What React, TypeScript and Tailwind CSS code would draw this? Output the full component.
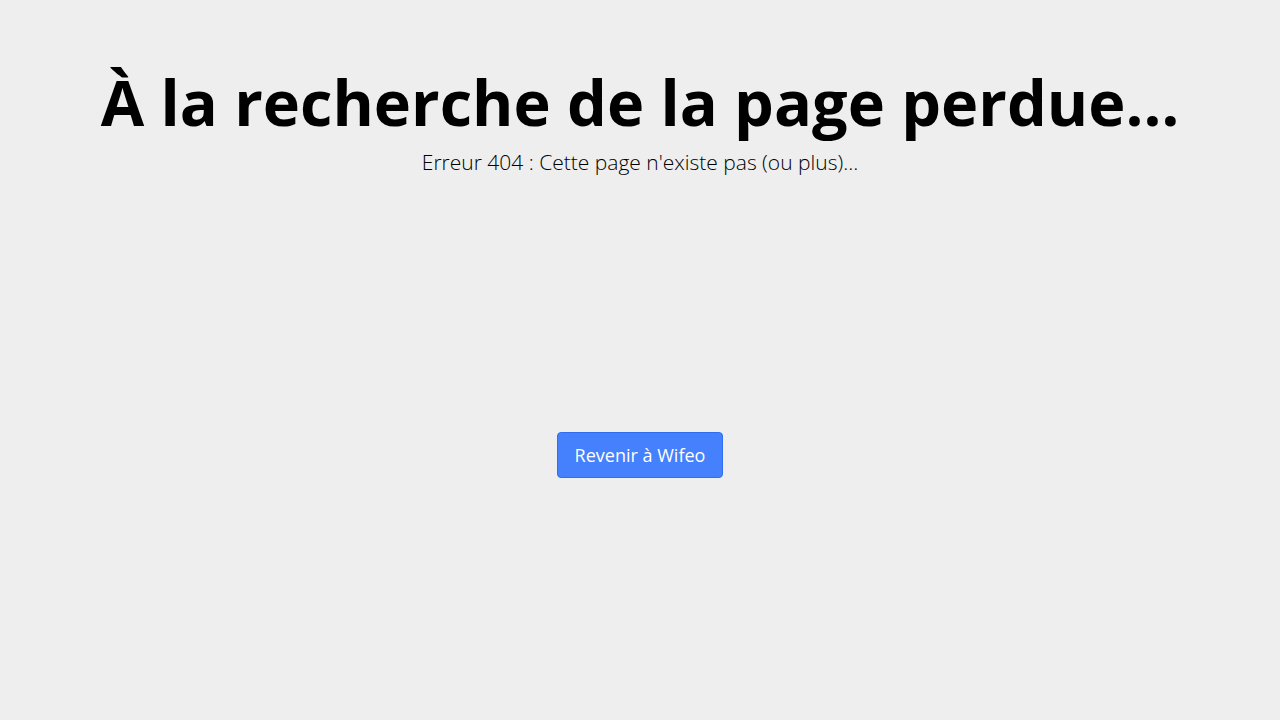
export default function App() {
  return (
    <div className="min-h-screen bg-[#eeeeee] text-black font-['Open_Sans',sans-serif] text-center">
      <div className="pt-[60px]">
        <h1 className="text-[63px] font-bold leading-[84px]">À la recherche de la page perdue…</h1>
        <p className="text-[21px] font-light leading-[28px] mt-[4px]">Erreur 404 : Cette page n'existe pas (ou plus)…</p>
      </div>
      <div className="mt-[256px] flex justify-center">
        <a
          href="#"
          className="inline-block px-[17px] h-[46px] leading-[44px] rounded-[4px] border border-[#2f6ef0] bg-[#4580fd] text-white text-[18px]"
        >
          Revenir à Wifeo
        </a>
      </div>
    </div>
  );
}
